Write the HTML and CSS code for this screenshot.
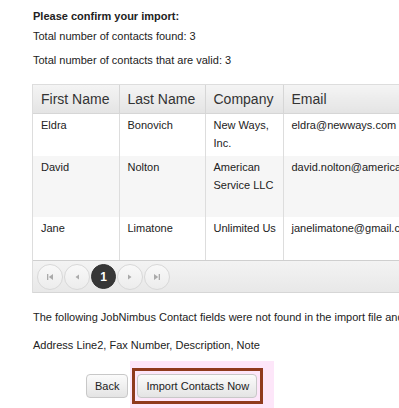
FILE: index.html
```html
<!DOCTYPE html>
<html lang="en">
  <head>
    <meta charset="UTF-8" />
    <meta name="viewport" content="width=device-width, initial-scale=1.0" />
    <title>Import Contacts</title>
    <link rel="stylesheet" href="styles.css">
  </head>
  <body>
    <div class="page">
      <h4 class="confirm-title">Please confirm your import:</h4>
      <p class="count">Total number of contacts found: 3</p>
      <p class="count last">Total number of contacts that are valid: 3</p>

      <div class="grid">
        <table class="contacts">
          <colgroup>
            <col class="c-first">
            <col class="c-last">
            <col class="c-company">
            <col class="c-email">
          </colgroup>
          <thead>
            <tr>
              <th>First Name</th>
              <th>Last Name</th>
              <th>Company</th>
              <th>Email</th>
            </tr>
          </thead>
          <tbody>
            <tr class="row-short">
              <td>Eldra</td>
              <td>Bonovich</td>
              <td>New Ways, Inc.</td>
              <td>eldra@newways.com</td>
            </tr>
            <tr class="row-tall alt">
              <td>David</td>
              <td>Nolton</td>
              <td>American Service LLC</td>
              <td>david.nolton@americanservice.com</td>
            </tr>
            <tr class="row-short">
              <td>Jane</td>
              <td>Limatone</td>
              <td>Unlimited Us</td>
              <td>janelimatone@gmail.com</td>
            </tr>
          </tbody>
        </table>
        <div class="pager">
          <span class="page-btn">
            <svg width="8" height="8" viewBox="0 0 8 8"><rect x="1" y="1" width="1.3" height="6" fill="#aaa"/><path d="M7 1 L2.8 4 L7 7 Z" fill="#aaa"/></svg>
          </span>
          <span class="page-btn">
            <svg width="8" height="8" viewBox="0 0 8 8"><path d="M6 1.5 L2.5 4 L6 6.5 Z" fill="#aaa"/></svg>
          </span>
          <span class="page-btn active">1</span>
          <span class="page-btn">
            <svg width="8" height="8" viewBox="0 0 8 8"><path d="M2 1.5 L5.5 4 L2 6.5 Z" fill="#aaa"/></svg>
          </span>
          <span class="page-btn">
            <svg width="8" height="8" viewBox="0 0 8 8"><path d="M1 1 L5.2 4 L1 7 Z" fill="#aaa"/><rect x="5.7" y="1" width="1.3" height="6" fill="#aaa"/></svg>
          </span>
        </div>
      </div>

      <p class="missing">The following JobNimbus Contact fields were not found in the import file and will be ignored:</p>
      <p class="missing">Address Line2, Fax Number, Description, Note</p>

      <div class="actions">
        <button class="btn">Back</button>
        <span class="highlight">
          <span class="callout"><button class="btn">Import Contacts Now</button></span>
        </span>
      </div>
    </div>
  </body>
</html>
```

FILE: styles.css
```css
* {
  margin: 0;
  padding: 0;
  box-sizing: border-box;
}
body {
  font-family: "Liberation Sans", Arial, sans-serif;
  font-size: 11px;
  color: #222;
  background: #fff;
  overflow: hidden;
}
.page {
  padding-left: 33px;
  white-space: nowrap;
}
.confirm-title {
  font-size: 11px;
  font-weight: bold;
  line-height: 16px;
  margin-top: 8px;
  margin-bottom: 4px;
}
.count {
  line-height: 16px;
  margin-bottom: 8px;
}
.count.last {
  margin-bottom: 16px;
}
.grid {
  width: 471px;
  margin-left: -1px;
  border-left: 1px solid #ddd;
  border-top: 1px solid #ddd;
}
.contacts {
  width: 100%;
  border-collapse: collapse;
  table-layout: fixed;
}
.c-first { width: 86px; }
.c-last { width: 86px; }
.c-company { width: 78px; }
.c-email { width: 221px; }
.contacts th {
  height: 28px;
  font-size: 14px;
  font-weight: normal;
  color: #333;
  text-align: left;
  padding: 0 8px;
  background: linear-gradient(#f4f4f4, #e4e4e4);
  border-right: 1px solid #d6d6d6;
  border-bottom: 1px solid #d6d6d6;
}
.contacts td {
  vertical-align: top;
  white-space: normal;
  line-height: 18px;
  padding: 2px 5px 4px 8px;
  border-right: 1px solid #ddd;
}
.row-short td { height: 43px; }
.row-tall td { height: 61px; }
.alt td { background: #f6f6f6; }
.contacts td:last-child { white-space: nowrap; }
.pager {
  height: 33px;
  display: flex;
  align-items: center;
  gap: 1px;
  padding-left: 4px;
  border-top: 1px solid #cfcfcf;
  border-bottom: 1px solid #d6d6d6;
  background: linear-gradient(#f3f3f3, #e8e8e8);
}
.page-btn {
  width: 26px;
  height: 26px;
  border-radius: 50%;
  border: 1px solid #d8d8d8;
  background: linear-gradient(#f8f8f8, #ececec);
  display: flex;
  align-items: center;
  justify-content: center;
}
.page-btn.active {
  width: 25px;
  height: 25px;
  border-color: #333;
  background: #373737;
  color: #fff;
  font-weight: bold;
  font-size: 12px;
}
.missing {
  line-height: 16px;
  margin-top: 16px;
}
.missing + .missing {
  margin-top: 12px;
}
.actions {
  margin-top: 8px;
  padding-left: 53px;
  display: flex;
  align-items: flex-start;
}
.btn {
  font-family: "Liberation Sans", Arial, sans-serif;
  font-size: 11px;
  color: #222;
  height: 24px;
  padding: 0 8px;
  border: 1px solid #c8c8c8;
  border-radius: 4px;
  background: linear-gradient(#fbfbfb, #e4e4e4);
}
.actions > .btn {
  margin-top: 13px;
}
.highlight {
  display: inline-block;
  height: 60px;
  margin-left: 2px;
  padding: 7px 11px 0 2px;
  background: #fde6f9;
}
.callout {
  display: inline-block;
  padding: 3px 3px 3px 2px;
  border: 3px solid #8f3a1d;
}
.callout .btn {
  width: 120px;
}
```
